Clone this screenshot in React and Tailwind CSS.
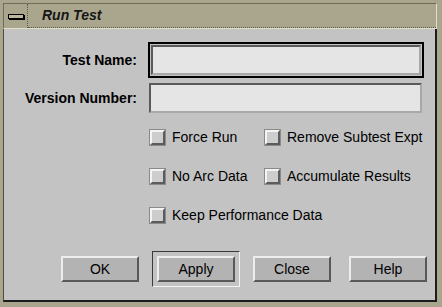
import React from 'react'

const font = { fontFamily: '"Liberation Sans", Arial, sans-serif' }

function CheckBox({ label, wide }) {
  return (
    <label className={`flex items-center gap-[7px] text-[14px] leading-[20px] text-black whitespace-nowrap ${wide ? 'col-span-2' : ''}`}>
      <span className="w-[15px] h-[15px] bg-[#cdcdcd] border-2 border-t-[#f4f4f4] border-l-[#f4f4f4] border-r-[#5c5c5c] border-b-[#5c5c5c] outline outline-1 outline-[#8a8a8a]" />
      <span>{label}</span>
    </label>
  )
}

function Button({ children }) {
  return (
    <button className="w-[78px] h-[26px] bg-[#b3b3b3] border-2 border-t-[#ededed] border-l-[#ededed] border-r-[#595959] border-b-[#595959] text-[14px] text-black leading-none">
      {children}
    </button>
  )
}

export default function App() {
  return (
    <div style={font} className="w-[442px] h-[307px] bg-[#aaa68d] flex flex-col pt-[3px] pl-[3px] pr-[5px] pb-[5px]">
      {/* title bar */}
      <div className="h-[26px] flex border border-t-[#6e6b5b] border-l-[#6e6b5b] border-r-[#e2dfc9] border-b-[#e2dfc9]">
        <div className="w-[24px] flex items-center justify-center border-r border-dotted border-r-[#5e5b4c]">
          <span className="w-[16px] h-[5px] bg-[#bdb9a0] border border-black shadow-[1px_1px_0_#000]" />
        </div>
        <div className="flex-1 flex items-center pl-[14px] border-b border-dotted border-b-[#5e5b4c]">
          <span className="text-[14px] font-bold italic text-[#161616]">Run Test</span>
        </div>
      </div>

      {/* dialog body */}
      <div className="flex-1 min-h-0 bg-[#c3c3c3] border-l-[1px] border-l-[#4e4c40] border-b-2 border-b-[#1c1c1c] border-r-2 border-r-[#1c1c1c] flex flex-col">
        <div className="flex items-center mt-[13px]">
          <span className="w-[133px] text-right text-[14px] font-bold text-black whitespace-nowrap">Test Name:</span>
          <div className="ml-[11px] w-[276px] h-[36px] border-[2px] border-black p-[1px]">
            <div className="w-full h-full bg-[#e5e5e5] border-2 border-t-[#5a5a5a] border-l-[#5a5a5a] border-r-[#a8a8a8] border-b-[#a8a8a8]" />
          </div>
        </div>
        <div className="flex items-center mt-[5px]">
          <span className="w-[133px] text-right text-[14px] font-bold text-black whitespace-nowrap">Version Number:</span>
          <div className="ml-[12px] w-[273px] h-[30px] bg-[#e5e5e5] border-2 border-t-[#5a5a5a] border-l-[#5a5a5a] border-r-[#a8a8a8] border-b-[#a8a8a8]" />
        </div>

        <div className="ml-[146px] mt-[14px] grid grid-cols-[115px_1fr] gap-y-[19px]">
          <CheckBox label="Force Run" />
          <CheckBox label="Remove Subtest Expt" />
          <CheckBox label="No Arc Data" />
          <CheckBox label="Accumulate Results" />
          <CheckBox label="Keep Performance Data" wide />
        </div>

        <div className="mt-[26px] flex items-center pl-[57px]">
          <Button>OK</Button>
          <div className="ml-[13px] p-[4px] border border-t-[#3a3a3a] border-l-[#3a3a3a] border-r-[#f2f2f2] border-b-[#f2f2f2]">
            <Button>Apply</Button>
          </div>
          <div className="ml-[13px]">
            <Button>Close</Button>
          </div>
          <div className="ml-[18px]">
            <Button>Help</Button>
          </div>
        </div>
      </div>
    </div>
  )
}
